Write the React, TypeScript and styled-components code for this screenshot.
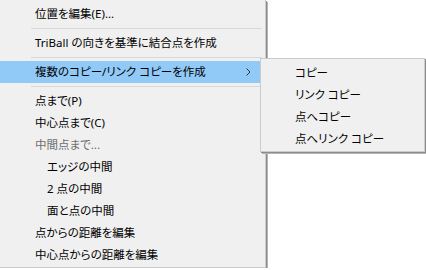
import styled, { createGlobalStyle } from "styled-components";

const GlobalStyle = createGlobalStyle`
  html, body {
    margin: 0;
    padding: 0;
    background: #ffffff;
  }
  body {
    font-family: "Noto Sans", "Noto Sans CJK JP", sans-serif;
    font-size: 11.5px;
    font-feature-settings: "palt";
    color: #000000;
  }
`;

interface IItem {
  label: string;
  indent?: boolean;
  disabled?: boolean;
  active?: boolean;
  sub?: string[];
}

type Entry = IItem | "sep";

const entries: Entry[] = [
  { label: "位置を編集(E)..." },
  "sep",
  { label: "TriBall の向きを基準に結合点を作成" },
  "sep",
  {
    label: "複数のコピー/リンク コピーを作成",
    active: true,
    sub: ["コピー", "リンク コピー", "点へコピー", "点へリンク コピー"],
  },
  "sep",
  { label: "点まで(P)" },
  { label: "中心点まで(C)" },
  { label: "中間点まで...", disabled: true },
  { label: "エッジの中間", indent: true },
  { label: "2 点の中間", indent: true },
  { label: "面と点の中間", indent: true },
  { label: "点からの距離を編集" },
  { label: "中心点からの距離を編集" },
];

const Menu = styled.div`
  width: 265px;
  padding: 3px 0 1px 0;
  background: #f0f0f0;
  border-right: 1px solid #cccccc;
  border-bottom: 1px solid #cccccc;
  box-shadow: 1px 1px 0 #8c8c8c, 2px 2px 0 #b4b4b4;
  display: flex;
  flex-direction: column;
`;

const Row = styled.div<{ $active?: boolean; $disabled?: boolean; $indent?: boolean }>`
  position: relative;
  height: 22px;
  display: flex;
  align-items: center;
  padding-left: ${(p) => (p.$indent ? 47 : 35)}px;
  padding-right: 12px;
  background: ${(p) => (p.$active ? "#91c9f7" : "transparent")};
  color: ${(p) => (p.$disabled ? "#6d6d6d" : "#000000")};
  white-space: nowrap;
`;

const Label = styled.span`
  flex: 1;
  line-height: 22px;
`;

const Arrow = styled.svg`
  width: 5px;
  height: 8px;
  margin-right: 2px;
`;

const Separator = styled.div`
  height: 7px;
  display: flex;
  align-items: center;
  padding: 0 3px 0 31px;
  &::after {
    content: "";
    flex: 1;
    height: 1px;
    background: #d7d7d7;
  }
`;

const SubMenu = styled.div`
  position: absolute;
  left: 260px;
  top: -3px;
  width: 163px;
  padding: 2px 0;
  background: #f0f0f0;
  border: 1px solid #cccccc;
  box-shadow: 1px 1px 0 #8c8c8c, 2px 2px 0 #b4b4b4;
  display: flex;
  flex-direction: column;
  z-index: 2;
`;

const SubRow = styled.div`
  height: 22px;
  display: flex;
  align-items: center;
  padding-left: 34px;
  white-space: nowrap;
`;

const App = () => {
  return (
    <>
      <GlobalStyle />
      <Menu>
        {entries.map((e, i) =>
          e === "sep" ? (
            <Separator key={i} />
          ) : (
            <Row key={i} $active={e.active} $disabled={e.disabled} $indent={e.indent}>
              <Label>{e.label}</Label>
              {e.sub && (
                <>
                  <Arrow viewBox="0 0 5 8">
                    <path d="M0.5 0.5 L4 4 L0.5 7.5" fill="none" stroke="#333" strokeWidth="1" />
                  </Arrow>
                  <SubMenu>
                    {e.sub.map((s) => (
                      <SubRow key={s}>{s}</SubRow>
                    ))}
                  </SubMenu>
                </>
              )}
            </Row>
          )
        )}
      </Menu>
    </>
  );
};

export default App;
